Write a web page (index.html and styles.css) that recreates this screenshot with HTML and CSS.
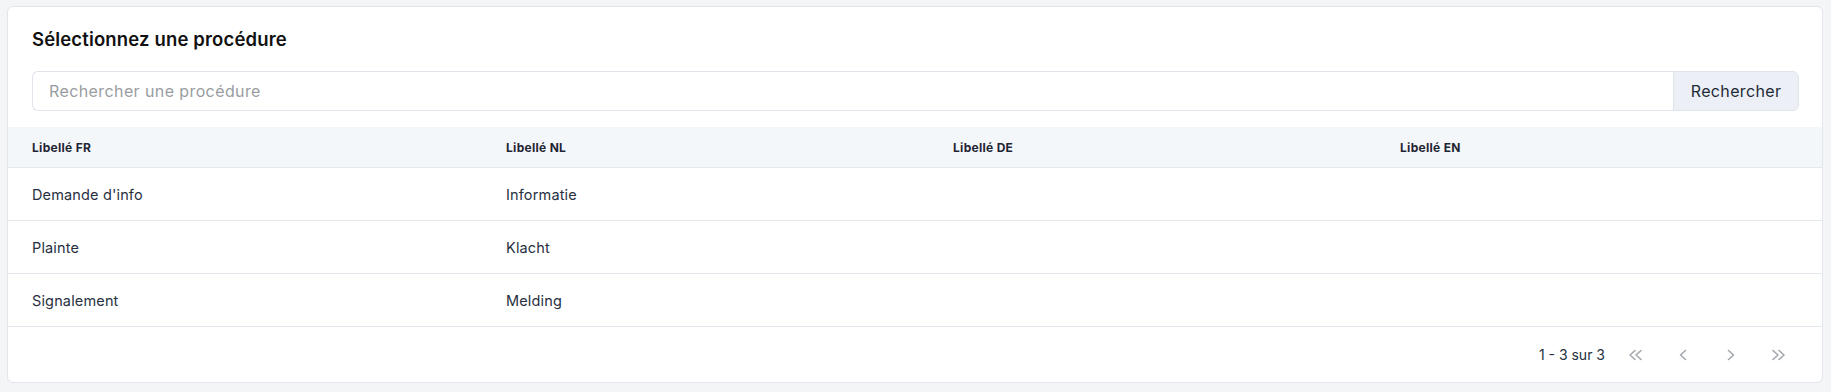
FILE: index.html
```html
<!DOCTYPE html>
<html lang="fr">
<head>
  <meta charset="UTF-8" />
  <title>Procédures</title>
  <link rel="stylesheet" href="styles.css">
</head>
<body>
  <div class="card">
    <div class="card-head">
      <h2 class="card-title">Sélectionnez une procédure</h2>
      <div class="search">
        <input type="text" class="search-input" placeholder="Rechercher une procédure" />
        <button class="search-btn">Rechercher</button>
      </div>
    </div>

    <table class="proc-table">
      <colgroup>
        <col class="col-fr">
        <col class="col-nl">
        <col class="col-de">
        <col>
      </colgroup>
      <thead>
        <tr>
          <th>Libellé FR</th>
          <th>Libellé NL</th>
          <th>Libellé DE</th>
          <th>Libellé EN</th>
        </tr>
      </thead>
      <tbody>
        <tr>
          <td>Demande d'info</td>
          <td>Informatie</td>
          <td></td>
          <td></td>
        </tr>
        <tr>
          <td>Plainte</td>
          <td>Klacht</td>
          <td></td>
          <td></td>
        </tr>
        <tr>
          <td>Signalement</td>
          <td>Melding</td>
          <td></td>
          <td></td>
        </tr>
      </tbody>
    </table>

    <div class="pager">
      <span class="pager-range">1 - 3 sur 3</span>
      <button class="pager-btn" title="Première page">
        <svg width="18" height="16" viewBox="0 0 18 16"><path d="M9 3.5 L4 8 L9 12.5 M15 3.5 L10 8 L15 12.5" /></svg>
      </button>
      <button class="pager-btn" title="Page précédente">
        <svg width="16" height="16" viewBox="0 0 16 16"><path d="M10.5 3.5 L5.5 8 L10.5 12.5" /></svg>
      </button>
      <button class="pager-btn" title="Page suivante">
        <svg width="16" height="16" viewBox="0 0 16 16"><path d="M5.5 3.5 L10.5 8 L5.5 12.5" /></svg>
      </button>
      <button class="pager-btn" title="Dernière page">
        <svg width="18" height="16" viewBox="0 0 18 16"><path d="M3 3.5 L8 8 L3 12.5 M9 3.5 L14 8 L9 12.5" /></svg>
      </button>
    </div>
  </div>
</body>
</html>
```

FILE: styles.css
```css
body {
  margin: 0;
  padding: 6px 8px 10px 7px;
  font-family: Inter, "Open Sans", sans-serif;
  background: #f4f5f7;
  color: #1f2937;
}

.card {
  background: #fff;
  border: 1px solid #e2e5eb;
  border-radius: 6px;
  overflow: hidden;
}

.card-head {
  padding: 20px 23px 16px 24px;
}

.card-title {
  margin: 0 0 20px;
  font-size: 18.5px;
  line-height: 24px;
  font-weight: 600;
  letter-spacing: 0.15px;
  color: #111;
}

.search {
  display: flex;
  height: 40px;
}

.search-input {
  flex: 1;
  padding: 0 16px;
  border: 1px solid #dfe3ea;
  border-right: none;
  border-radius: 6px 0 0 6px;
  outline: none;
  font-family: inherit;
  font-size: 16px;
  letter-spacing: 0.4px;
  color: #1f2937;
}

.search-input::placeholder {
  color: #9a9ca1;
}

.search-btn {
  width: 126px;
  border: 1px solid #dfe3ea;
  border-radius: 0 6px 6px 0;
  background: #ecf0f6;
  font-family: inherit;
  font-size: 16px;
  letter-spacing: 0.35px;
  color: #1f2937;
  cursor: pointer;
}

.proc-table {
  width: 100%;
  border-collapse: collapse;
  table-layout: fixed;
}

.col-fr {
  width: 474px;
}

.col-nl,
.col-de {
  width: 447px;
}

.proc-table th {
  height: 40px;
  padding: 0 24px;
  background: #f4f7fa;
  border-bottom: 1px solid #e5e8ee;
  text-align: left;
  font-size: 12px;
  font-weight: 700;
  letter-spacing: 0.3px;
  color: #1f2533;
}

.proc-table td {
  height: 52px;
  padding: 0 24px;
  border-bottom: 1px solid #e5e8ee;
  font-size: 14.5px;
  letter-spacing: 0.15px;
  color: #27303f;
}

.pager {
  display: flex;
  justify-content: flex-end;
  align-items: center;
  gap: 8px;
  height: 55px;
  padding: 0 23px;
}

.pager-range {
  margin-right: 2px;
  font-size: 14px;
  color: #27303f;
}

.pager-btn {
  display: flex;
  align-items: center;
  justify-content: center;
  width: 40px;
  height: 40px;
  padding: 0;
  border: none;
  background: none;
  cursor: pointer;
}

.pager-btn path {
  fill: none;
  stroke: #a3a7ae;
  stroke-width: 1.6;
  stroke-linecap: round;
  stroke-linejoin: round;
}
```
